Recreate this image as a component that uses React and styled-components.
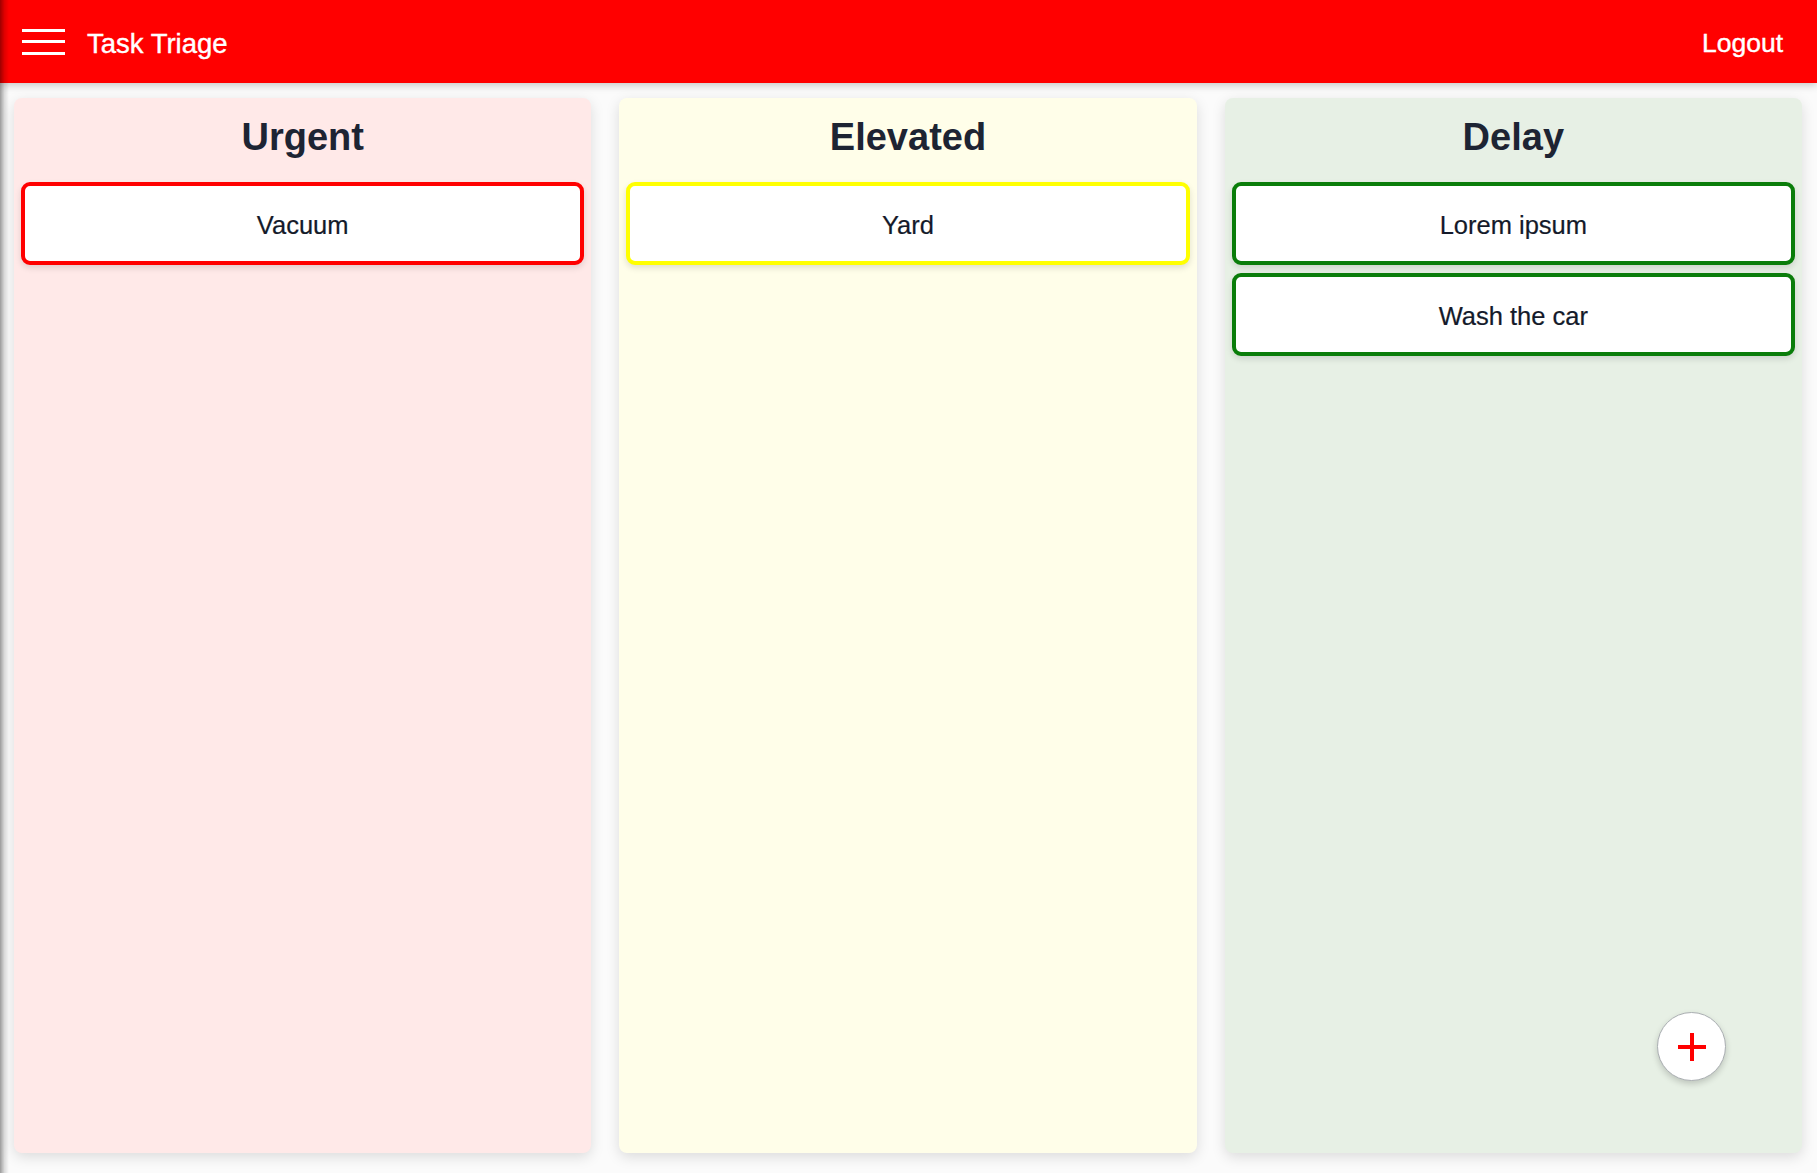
import React from "react";
import styled, { createGlobalStyle } from "styled-components";

const GlobalStyle = createGlobalStyle`
  html, body { margin: 0; padding: 0; }
  body {
    background: #fbfbfb;
    font-family: "Liberation Sans", Arial, Helvetica, sans-serif;
    overflow: hidden;
  }
  * { box-sizing: border-box; }
`;

const Page = styled.div`
  display: flex;
  flex-direction: column;
  height: 100vh;
`;

const Header = styled.header`
  position: relative;
  z-index: 2;
  height: 83px;
  flex: 0 0 83px;
  background: #ff0000;
  display: flex;
  align-items: center;
  justify-content: space-between;
  padding: 4px 34px 0 22px;
  box-shadow: 0 2px 8px rgba(0, 0, 0, 0.22);
`;

const Brand = styled.div`
  display: flex;
  align-items: center;
  gap: 22px;
`;

const Hamburger = styled.button`
  width: 43px;
  height: 26px;
  padding: 0;
  border: none;
  background: transparent;
  display: flex;
  flex-direction: column;
  justify-content: space-between;
  cursor: pointer;
  margin-top: -4px;
`;

const Bar = styled.span`
  display: block;
  height: 3px;
  width: 100%;
  background: #ffffff;
`;

const Title = styled.h1`
  margin: 0;
  color: #ffffff;
  font-size: 27.5px;
  font-weight: 400;
  -webkit-text-stroke: 0.4px #ffffff;
`;

const LogoutButton = styled.button`
  border: none;
  background: transparent;
  color: #ffffff;
  font-family: inherit;
  font-size: 26.5px;
  padding: 0;
  cursor: pointer;
  -webkit-text-stroke: 0.4px #ffffff;
`;

const Board = styled.main`
  flex: 1;
  display: grid;
  grid-template-columns: repeat(3, 1fr);
  gap: 28px;
  padding: 15px 15px 20px 14px;
  min-height: 0;
`;

const Column = styled.section`
  background: ${(p) => p.$bg};
  border-radius: 8px;
  box-shadow: 0 4px 14px rgba(0, 0, 0, 0.13);
  padding: 17px 7px 8px;
  display: flex;
  flex-direction: column;
  gap: 8px;
`;

const ColumnTitle = styled.h2`
  margin: 0 0 15px;
  text-align: center;
  font-size: 38px;
  line-height: 44px;
  font-weight: 700;
  color: #1d2433;
`;

const Card = styled.div`
  height: 83px;
  flex: 0 0 83px;
  background: #ffffff;
  border: 4px solid ${(p) => p.$border};
  border-radius: 9px;
  box-shadow: 0 3px 6px rgba(0, 0, 0, 0.12);
  display: flex;
  align-items: center;
  justify-content: center;
  padding-top: 3px;
  font-size: 25.5px;
  color: #141a2a;
  -webkit-text-stroke: 0.2px #141a2a;
`;

const EdgeShadow = styled.div`
  position: fixed;
  top: 0;
  left: 0;
  bottom: 0;
  width: 9px;
  pointer-events: none;
  z-index: 5;
  background: linear-gradient(to right, rgba(0, 0, 0, 0.38), rgba(0, 0, 0, 0.12) 50%, rgba(0, 0, 0, 0));
`;

const Fab = styled.button`
  position: fixed;
  right: 91px;
  bottom: 92px;
  width: 69px;
  height: 69px;
  border-radius: 50%;
  background: #ffffff;
  border: 1px solid #a9adb1;
  box-shadow: 0 3px 6px rgba(0, 0, 0, 0.18);
  display: flex;
  align-items: center;
  justify-content: center;
  padding: 0;
  cursor: pointer;
`;

const columns = [
  { title: "Urgent", bg: "#ffe9e8", border: "#ff0000", tasks: ["Vacuum"] },
  { title: "Elevated", bg: "#fffee9", border: "#ffff00", tasks: ["Yard"] },
  { title: "Delay", bg: "#e7f0e5", border: "#0a7d0a", tasks: ["Lorem ipsum", "Wash the car"] },
];

export default function App() {
  return (
    <>
      <GlobalStyle />
      <Page>
        <Header>
          <Brand>
            <Hamburger aria-label="menu">
              <Bar />
              <Bar />
              <Bar />
            </Hamburger>
            <Title>Task Triage</Title>
          </Brand>
          <LogoutButton>Logout</LogoutButton>
        </Header>
        <Board>
          {columns.map((c) => (
            <Column key={c.title} $bg={c.bg}>
              <ColumnTitle>{c.title}</ColumnTitle>
              {c.tasks.map((t) => (
                <Card key={t} $border={c.border}>
                  {t}
                </Card>
              ))}
            </Column>
          ))}
        </Board>
      </Page>
      <Fab aria-label="add task">
        <svg width="32" height="32" viewBox="0 0 32 32">
          <path d="M16 2 V30 M2 16 H30" stroke="#ff0000" strokeWidth="4" fill="none" />
        </svg>
      </Fab>
      <EdgeShadow />
    </>
  );
}
